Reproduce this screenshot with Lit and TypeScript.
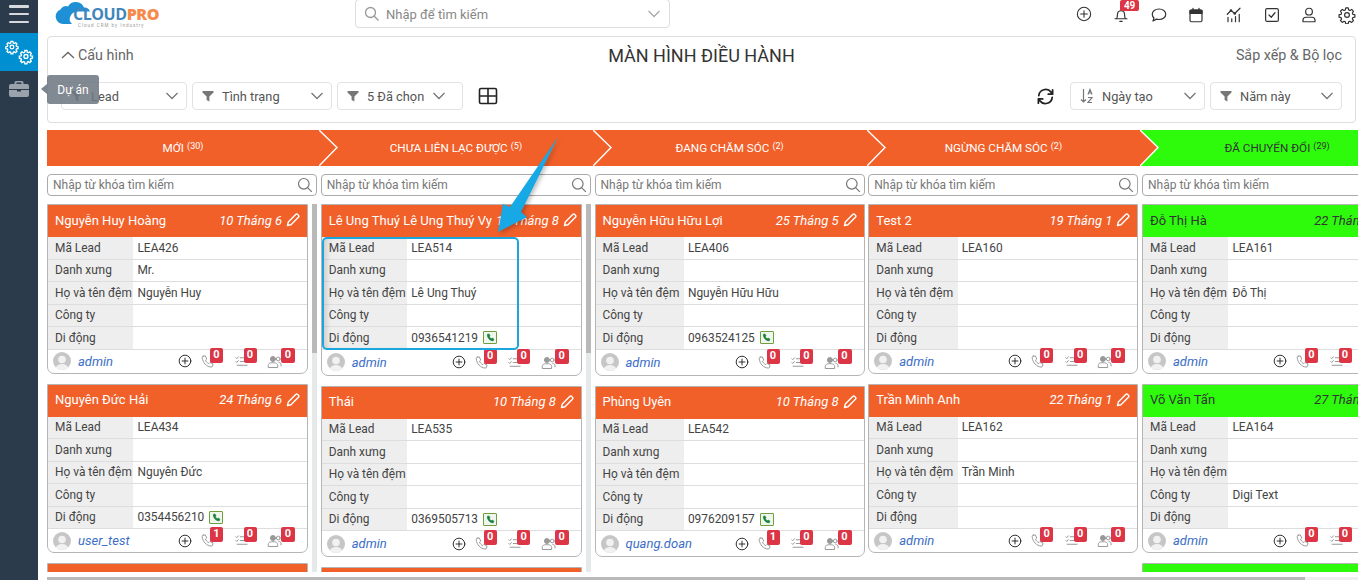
import { LitElement, css, html, svg } from "lit";
import { customElement } from "lit/decorators.js";
import { classMap } from "lit/directives/class-map.js";

const icon = (body: unknown, size = 18) =>
  html`<svg class="ico" width=${size} height=${size} viewBox="0 0 24 24" fill="none" stroke="currentColor" stroke-width="1.600" stroke-linecap="round" stroke-linejoin="round">${body}</svg>`;

const chevronDown = () => html`<svg class="chev" width="14" height="8" viewBox="0 0 14 8" fill="none" stroke="currentColor" stroke-width="1.300"><path d="M1.500 1 7 6.500 12.500 1" /></svg>`;
const funnel = () => html`<svg class="funnel" width="12" height="12" viewBox="0 0 12 12" fill="currentColor"><path d="M.5 1h11v1.400L7.400 6.600V11.500L4.600 10V6.600L.5 2.400z" /></svg>`;

const plusCircle = svg`<circle cx="12" cy="12" r="10" /><path d="M12 7v10M7 12h10" />`;
const bell = svg`<path d="M6 17c1-1.500 1.300-3 1.300-6a4.700 4.700 0 0 1 9.400 0c0 3 .3 4.500 1.300 6zM4 17h16M10.500 20.500h3M12 3v2" />`;
const comment = svg`<path d="M12 4c5.200 0 9 3 9 7s-3.800 7-9 7c-1.200 0-2.300-.2-3.300-.5L4 20l1.300-4C3.900 14.700 3 13 3 11c0-4 3.800-7 9-7z" />`;
const calendar = svg`<rect x="4" y="5" width="16" height="16" rx="2" /><path d="M4 6h16v4H4z" fill="currentColor" /><path d="M8 3v3M16 3v3" />`;
const chart = svg`<path d="M4 21v-6M9 21v-4M14 21v-7M19 21V11M3 11l5-5 5 4 7-7" /><circle cx="8" cy="6" r="1" /><circle cx="13" cy="10" r="1" />`;
const checkSquare = svg`<rect x="3.500" y="3.500" width="17" height="17" rx="2" /><path d="m8 12 3 3 5-6" />`;
const user = svg`<circle cx="12" cy="7.500" r="4.500" /><path d="M4 21v-2c0-2.500 2-4 4-4h8c2 0 4 1.500 4 4v2z" />`;
const gear = svg`<circle cx="12" cy="12" r="3.200" /><path d="M10.300 2.500h3.400l.5 2.700 1.700.8 2.400-1.400 2.300 2.500-1.500 2.200.7 1.800 2.700.5v3.300l-2.700.5-.7 1.800 1.500 2.300-2.400 2.400-2.300-1.500-1.800.8-.5 2.700h-3.300l-.5-2.700-1.800-.8-2.300 1.500-2.400-2.400 1.500-2.300-.8-1.800-2.600-.5v-3.300l2.700-.5.700-1.800-1.500-2.300 2.400-2.400 2.300 1.500 1.800-.8z" />`;
const refresh = svg`<path d="M3.500 11a8.700 8.700 0 0 1 15.500-4.500L21 9M21 3.500V9h-5.500M20.500 13A8.700 8.700 0 0 1 5 17.500L3 15M3 20.500V15h5.500" stroke-width="2.200" />`;
const phone = svg`<path d="M5 3.500 8.500 3l2.300 5-2 1.800c.8 2.300 2.600 4.400 5.200 5.600l2-2 4.800 2.500-.6 3.500c-.3 1-1.300 1.600-2.400 1.500C10.300 20.300 4.500 14 3.500 6c0-1.200.5-2.200 1.500-2.500z" />`;
const phoneSolid = svg`<path d="M5 3.500 8.500 3l2.300 5-2 1.800c.8 2.300 2.600 4.400 5.200 5.600l2-2 4.800 2.500-.6 3.500c-.3 1-1.300 1.600-2.400 1.500C10.300 20.300 4.500 14 3.500 6c0-1.200.5-2.200 1.500-2.500z" fill="currentColor" />`;
const tasks = svg`<path d="M10 6h11M10 12h11M5 18h16M3 6l1.500 1.500L7 4.500M3 12l1.500 1.500L7 10.500" />`;
const people = svg`<circle cx="9.500" cy="8" r="4" fill="currentColor" /><path d="M2 21v-2.500C2 15.500 4.500 14 7 14h5c2.500 0 5 1.500 5 4.500V21z" /><circle cx="18" cy="8" r="3" /><path d="M19 13.500c2 .3 3.500 1.500 3.500 4V19" />`;
const pencil = html`<svg class="pencil" width="14" height="14" viewBox="0 0 14 14" fill="none" stroke="currentColor" stroke-width="1.400" stroke-linejoin="round"><path d="M1.500 12.500 2.300 9 9.700 1.600a1.500 1.500 0 0 1 2.100 0l.6.6a1.500 1.500 0 0 1 0 2.100L5 11.700z" /></svg>`;

interface Card {
  name: string;
  date: string;
  lead: string;
  title?: string;
  middle?: string;
  company?: string;
  mobile?: string;
  owner: string;
  calls?: number;
  tall?: boolean;
}

interface Column {
  stage: string;
  count: number;
  green?: boolean;
  bar?: boolean;
  scrollbar?: boolean;
  cards: Card[];
}

const columns: Column[] = [
  {
    stage: "MỚI", count: 30, bar: true, scrollbar: true,
    cards: [
      { name: "Nguyễn Huy Hoàng", date: "10 Tháng 6", lead: "LEA426", title: "Mr.", middle: "Nguyễn Huy", owner: "admin" },
      { name: "Nguyên Đức Hải", date: "24 Tháng 6", lead: "LEA434", middle: "Nguyên Đức", mobile: "0354456210", owner: "user_test", calls: 1 },
      { name: "", date: "", lead: "", owner: "" },
    ],
  },
  {
    stage: "CHƯA LIÊN LẠC ĐƯỢC", count: 5, bar: true, scrollbar: true,
    cards: [
      { name: "Lê Ung Thuý Lê Ung Thuý Vy", date: "10 Tháng 8", lead: "LEA514", middle: "Lê Ung Thuý", mobile: "0936541219", owner: "admin", tall: true },
      { name: "Thái", date: "10 Tháng 8", lead: "LEA535", mobile: "0369505713", owner: "admin", tall: true },
      { name: "", date: "", lead: "", owner: "" },
    ],
  },
  {
    stage: "ĐANG CHĂM SÓC", count: 2,
    cards: [
      { name: "Nguyễn Hữu Hữu Lợi", date: "25 Tháng 5", lead: "LEA406", middle: "Nguyễn Hữu Hữu", mobile: "0963524125", owner: "admin", tall: true },
      { name: "Phùng Uyên", date: "10 Tháng 8", lead: "LEA542", mobile: "0976209157", owner: "quang.doan", calls: 1, tall: true },
    ],
  },
  {
    stage: "NGỪNG CHĂM SÓC", count: 2,
    cards: [
      { name: "Test 2", date: "19 Tháng 1", lead: "LEA160", owner: "admin" },
      { name: "Trần Minh Anh", date: "22 Tháng 1", lead: "LEA162", middle: "Trần Minh", owner: "admin" },
    ],
  },
  {
    stage: "ĐÃ CHUYỂN ĐỔI", count: 29, green: true, scrollbar: true,
    cards: [
      { name: "Đỗ Thị Hà", date: "22 Tháng 1", lead: "LEA161", middle: "Đỗ Thị", owner: "admin" },
      { name: "Võ Văn Tấn", date: "27 Tháng 1", lead: "LEA164", company: "Digi Text", owner: "admin" },
      { name: "", date: "", lead: "", owner: "" },
    ],
  },
];

@customElement("app-root")
export class AppRoot extends LitElement {
  static styles = css`
    :host {
      display: flex;
      height: 580px;
      width: 1358px;
      overflow: hidden;
      position: relative;
      background: #fff;
      font-family: Roboto, "Noto Sans", sans-serif;
      font-size: 12px;
      color: #444;
    }

    .side {
      width: 38px;
      flex: none;
      background: #2b3b4b;
      display: flex;
      flex-direction: column;
    }
    .burger {
      height: 33px;
      display: flex;
      flex-direction: column;
      gap: 5.300px;
      padding: 5px 9px 0;
      box-sizing: border-box;
    }
    .burger i {
      display: block;
      height: 2.500px;
      background: #d6dade;
      border-radius: 1px;
    }
    .side-item {
      height: 38px;
      display: flex;
      align-items: center;
      justify-content: center;
      color: #fff;
    }
    .side-item.active {
      background: #0090d1;
    }
    .side-item.case {
      height: 36px;
    }

    .tooltip {
      position: absolute;
      left: 47px;
      top: 75px;
      width: 52px;
      height: 29px;
      border-radius: 3px;
      background: rgba(108, 118, 128, 0.86);
      color: #fff;
      font-size: 12px;
      display: flex;
      align-items: center;
      justify-content: center;
    }
    .tooltip::before {
      content: "";
      position: absolute;
      left: -6px;
      top: 9px;
      border: 5px solid transparent;
      border-left: 0;
      border-right: 6px solid #7c858e;
    }

    .main {
      flex: 1;
      min-width: 0;
      display: flex;
      flex-direction: column;
    }

    .top {
      height: 36px;
      flex: none;
      display: flex;
      align-items: flex-start;
      padding-left: 17px;
      box-sizing: border-box;
    }
    .logo {
      width: 300px;
      flex: none;
      height: 28px;
      position: relative;
      display: flex;
      flex-direction: column;
      align-items: flex-start;
    }
    .logo-text {
      margin: 6px 0 0 18px;
      font-family: "Open Sans", sans-serif;
      font-weight: 700;
      font-size: 16px;
      letter-spacing: -0.45px;
      line-height: 17px;
      color: #3f86bd;
      position: relative;
    }
    .logo-text b {
      color: #f58a4b;
    }
    .logo-tag {
      margin-left: 23px;
      font-size: 4.500px;
      line-height: 5px;
      letter-spacing: 1px;
      color: #999;
      position: relative;
      white-space: nowrap;
    }
    .logo-cloud {
      position: absolute;
      left: 0;
      top: 2px;
    }
    .global-search {
      width: 315px;
      height: 29px;
      flex: none;
      margin-top: -1px;
      padding: 1px 8px 0;
      box-sizing: border-box;
      border: 1px solid #ddd;
      border-radius: 4px;
      display: flex;
      align-items: center;
      gap: 6px;
      color: #888;
      font-size: 13px;
    }
    .global-search span {
      flex: 1;
    }
    .global-search .chev {
      color: #aaa;
    }
    .tools {
      margin-left: auto;
      display: flex;
      gap: 19.700px;
      padding: 6px 2px 0 0;
      color: #333;
    }
    .tool {
      position: relative;
      display: flex;
    }
    .notif {
      position: absolute;
      left: 8px;
      top: -6px;
      background: #dc3545;
      color: #fff;
      font-size: 10px;
      font-style: normal;
      font-weight: 700;
      border-radius: 2px;
      padding: 0 4px;
      line-height: 11px;
    }

    .panel {
      height: 87px;
      flex: none;
      box-sizing: border-box;
      margin: 0 2px 0 9px;
      border: 1px solid #ddd;
      border-radius: 4px;
      padding: 0 13px;
      display: flex;
      flex-direction: column;
    }
    .panel-head {
      height: 36px;
      display: grid;
      grid-template-columns: 1fr auto 1fr;
      align-items: center;
      font-size: 14.300px;
      color: #666;
    }
    .config {
      display: flex;
      align-items: center;
      gap: 3px;
    }
    .panel-title {
      font-size: 18px;
      color: #333;
    }
    .sort-title {
      text-align: right;
    }
    .filters {
      margin-top: 9px;
      display: flex;
      align-items: center;
      gap: 5px;
    }
    .select {
      height: 28px;
      box-sizing: border-box;
      border: 1px solid #e2e2e2;
      border-radius: 4px;
      display: flex;
      align-items: center;
      padding: 0 7px 0 9px;
      gap: 8px;
      font-size: 12.800px;
      color: #555;
    }
    .select span {
      flex: 1;
    }
    .select.w126 {
      width: 126px;
    }
    .select.w140 {
      width: 140px;
    }
    .select.w135 {
      width: 135px;
    }
    .select.w132 {
      width: 132px;
    }
    .select.compact {
      justify-content: flex-start;
    }
    .select.compact span {
      flex: none;
    }
    .select .chev,
    .select .funnel,
    .sort-ico {
      color: #777;
      flex: none;
    }
    .grid-btn {
      margin-left: 10px;
      color: #222;
      display: flex;
    }
    .refresh {
      margin-left: auto;
      margin-right: 10px;
      color: #222;
      display: flex;
    }

    .stages {
      margin: 7px 0 0 9px;
      height: 36px;
      flex: none;
      display: grid;
      grid-template-columns: 272px repeat(4, 273.750px);
    }
    .stage {
      position: relative;
      background: #f2602a;
      color: #fff;
      font-size: 11.700px;
      display: flex;
      align-items: center;
      justify-content: center;
      gap: 3px;
      min-width: 0;
      white-space: nowrap;
    }
    .stage sup {
      font-size: 9px;
      line-height: 9px;
      margin-top: -3px;
    }
    .stage.green {
      background: #2dfb0b;
      color: #333;
    }
    .stage .tip {
      position: absolute;
      left: 100%;
      top: 0;
      z-index: 1;
    }

    .board {
      height: 398px;
      flex: none;
      overflow: hidden;
      margin: 8px 0 0 9px;
      display: grid;
      grid-template-columns: repeat(5, 270px);
      gap: 3.750px;
    }
    .col {
      min-width: 0;
      display: flex;
      flex-direction: column;
    }
    .col-search {
      height: 22px;
      flex: none;
      box-sizing: border-box;
      border: 1px solid #aaa;
      border-radius: 4px;
      display: flex;
      align-items: center;
      justify-content: space-between;
      padding: 0 3px 0 5px;
      color: #777;
      font-size: 12px;
    }
    .col-body {
      margin-top: 8px;
      flex: 1;
      min-height: 0;
      display: flex;
      gap: 4px;
    }
    .cards {
      flex: 1;
      min-width: 0;
      display: flex;
      flex-direction: column;
      gap: 10px;
    }
    .col.scrollbar .cards {
      flex: none;
      width: 261px;
    }
    .bar {
      width: 5px;
      flex: none;
      background: #e6e9e9;
    }
    .bar i {
      display: block;
      height: 149px;
      background: #b9b9b9;
    }

    .card {
      flex: none;
      border: 1px solid #b5b5b5;
      border-radius: 0 0 7px 7px;
      overflow: hidden;
    }
    .card-head {
      height: 32px;
      box-sizing: border-box;
      padding: 0 7px 2px;
      background: #f2602a;
      color: #fff;
      display: flex;
      align-items: center;
      gap: 4px;
      font-size: 13px;
      white-space: nowrap;
    }
    .green .card-head {
      background: #2dfb0b;
      color: #333;
    }
    .card-name {
      flex: 1;
    }
    .card-date {
      font-style: italic;
    }
    .pencil {
      flex: none;
    }
    .row {
      display: grid;
      grid-template-columns: 33% 1fr;
      min-height: 21.500px;
      border-bottom: 1px solid #ddd;
      align-items: stretch;
      font-size: 11.900px;
    }
    .row b {
      font-weight: 400;
      background: #eee;
      padding-left: 7px;
      display: flex;
      align-items: center;
      color: #444;
      white-space: nowrap;
    }
    .row span {
      display: flex;
      align-items: center;
      padding-left: 4px;
      gap: 5px;
      color: #444;
    }
    .tel {
      width: 14px;
      height: 13px;
      box-sizing: border-box;
      border: 1.500px solid #6f9e3a;
      border-radius: 1px;
      background: #eef6ee;
      color: #17803a;
      display: flex;
      align-items: center;
      justify-content: center;
    }
    .card-foot {
      height: 23px;
      display: flex;
      align-items: center;
      padding: 0 25px 0 5px;
      gap: 7px;
    }
    .card-foot.tall {
      height: 25px;
    }
    .avatar {
      flex: none;
      display: flex;
    }
    .owner {
      flex: 1;
      font-style: italic;
      color: #3b6ec6;
      font-size: 13px;
    }
    .plus {
      color: #222;
      display: flex;
    }
    .acts {
      display: flex;
      gap: 18.500px;
      margin-left: 1px;
      color: #999;
    }
    .act {
      position: relative;
      width: 15px;
      display: flex;
    }
    .badge {
      position: absolute;
      left: 10px;
      top: -6px;
      width: 13px;
      height: 15px;
      border-radius: 2px;
      background: #dc3545;
      color: #fff;
      font-size: 11px;
      font-style: normal;
      font-weight: 700;
      line-height: 14px;
      text-align: center;
    }
    .act.third .badge {
      left: 14px;
      width: 14px;
    }

    .hscroll {
      height: 3px;
      flex: none;
      margin: 5px 0 0 9px;
      background: #efefef;
    }
    .hscroll i {
      display: block;
      width: 1258px;
      height: 100%;
      background: #b9b9b9;
    }

    .mark {
      position: absolute;
      left: 322px;
      top: 237px;
      width: 197px;
      height: 113px;
      box-sizing: border-box;
      border: 2px solid #1ba7de;
      border-radius: 5px;
      box-shadow: inset 6px 0 6px -4px rgba(0, 0, 0, 0.16);
      pointer-events: none;
    }
    .arrow {
      position: absolute;
      left: 490px;
      top: 130px;
      pointer-events: none;
      filter: drop-shadow(2px 2px 2px rgba(0, 0, 0, 0.25));
    }
  `;

  renderStage(col: Column, index: number) {
    const last = index === columns.length - 1;
    return html`<div class=${classMap({ stage: true, green: !!col.green })}>
      ${col.stage} <sup>(${col.count})</sup>
      ${last
        ? null
        : html`<svg class="tip" width="20" height="36" viewBox="0 0 20 36">
            <path d="M0 0 18 17.500 0 36z" fill="#f2602a" />
            <path d="M0 0 18 17.500 0 36" fill="none" stroke="#fff" stroke-width="1.400" />
          </svg>`}
    </div>`;
  }

  renderRow(label: string, value?: string, tel = false) {
    return html`<div class="row">
      <b>${label}</b>
      <span>${value}${tel ? html`<i class="tel">${icon(phoneSolid, 9)}</i>` : null}</span>
    </div>`;
  }

  renderCard(card: Card) {
    if (!card.lead) return html`<div class="card"><div class="card-head"></div></div>`;
    return html`<div class="card">
      <div class="card-head">
        <span class="card-name">${card.name}</span>
        <span class="card-date">${card.date}</span>
        ${pencil}
      </div>
      ${this.renderRow("Mã Lead", card.lead)}
      ${this.renderRow("Danh xưng", card.title)}
      ${this.renderRow("Họ và tên đệm", card.middle)}
      ${this.renderRow("Công ty", card.company)}
      ${this.renderRow("Di động", card.mobile, !!card.mobile)}
      <div class=${classMap({ "card-foot": true, tall: !!card.tall })}>
        <span class="avatar">
          <svg width="18" height="18" viewBox="0 0 18 18">
            <defs><clipPath id="round"><circle cx="9" cy="9" r="9" /></clipPath></defs>
            <circle cx="9" cy="9" r="9" fill="#c6c6c6" />
            <g clip-path="url(#round)" fill="#f1f1f1">
              <circle cx="9" cy="7.500" r="3.800" />
              <ellipse cx="9" cy="17" rx="6.500" ry="5" />
            </g>
          </svg>
        </span>
        <span class="owner">${card.owner}</span>
        <span class="plus">${icon(plusCircle, 14)}</span>
        <div class="acts">
          <span class="act">${icon(phone, 15)}<em class="badge">${card.calls ?? 0}</em></span>
          <span class="act">${icon(tasks, 15)}<em class="badge">0</em></span>
          <span class="act third">${icon(people, 15)}<em class="badge">0</em></span>
        </div>
      </div>
    </div>`;
  }

  render() {
    return html`
      <aside class="side">
        <div class="burger"><i></i><i></i><i></i></div>
        <div class="side-item active">
          <svg width="30" height="25" viewBox="0 0 30 25" fill="none" stroke="#fff" stroke-width="2.200">
            <g transform="translate(1 0) scale(.58)">${gear}</g>
            <g transform="translate(14.500 9) scale(.62)">${gear}</g>
          </svg>
        </div>
        <div class="side-item case">
          <svg width="20" height="16" viewBox="0 0 20 16" fill="#9aa3ac">
            <path d="M7 0h6a1.500 1.500 0 0 1 1.500 1.500V3H18a2 2 0 0 1 2 2v3H0V5a2 2 0 0 1 2-2h3.500V1.500A1.500 1.500 0 0 1 7 0zm.5 1.500V3h5V1.500z" />
            <path d="M0 9h8v1.500h4V9h8v5a2 2 0 0 1-2 2H2a2 2 0 0 1-2-2z" />
          </svg>
        </div>
      </aside>

      <div class="main">
        <header class="top">
          <div class="logo">
            <svg class="logo-cloud" width="40" height="24" viewBox="0 0 40 24" fill="#1f8fd6">
              <path d="M8 22A7.500 7.500 0 0 1 5.500 7.500 6 6 0 0 1 13 4.500 9 9 0 0 1 29 5.500 6 6 0 0 1 35 9.500H24A8 8 0 0 0 15 19.500L17 22Z" />
            </svg>
            <span class="logo-text">CLOUD<b>PRO</b></span>
            <span class="logo-tag">Cloud CRM by Industry</span>
          </div>
          <div class="global-search">
            <svg width="16" height="16" viewBox="0 0 16 16" fill="none" stroke="#999" stroke-width="1.300"><circle cx="6.500" cy="6.500" r="5" /><path d="m10.300 10.300 4.200 4.200" /></svg>
            <span>Nhập để tìm kiếm</span>
            ${chevronDown()}
          </div>
          <nav class="tools">
            <span class="tool">${icon(plusCircle, 16)}</span>
            <span class="tool">${icon(bell, 18)}<em class="notif">49</em></span>
            <span class="tool">${icon(comment, 18)}</span>
            <span class="tool">${icon(calendar, 18)}</span>
            <span class="tool">${icon(chart, 18)}</span>
            <span class="tool">${icon(checkSquare, 18)}</span>
            <span class="tool">${icon(user, 18)}</span>
            <span class="tool">${icon(gear, 18)}</span>
          </nav>
        </header>

        <section class="panel">
          <div class="panel-head">
            <span class="config">
              <svg width="14" height="8" viewBox="0 0 14 8" fill="none" stroke="#666" stroke-width="1.300"><path d="M1 7 7 1.500 13 7" /></svg>
              Cấu hình
            </span>
            <span class="panel-title">MÀN HÌNH ĐIỀU HÀNH</span>
            <span class="sort-title">Sắp xếp &amp; Bộ lọc</span>
          </div>
          <div class="filters">
            <div class="select w126">${funnel()}<span>Lead</span>${chevronDown()}</div>
            <div class="select w140">${funnel()}<span>Tình trạng</span>${chevronDown()}</div>
            <div class="select w126 compact">${funnel()}<span>5 Đã chọn</span>${chevronDown()}</div>
            <span class="grid-btn">
              <svg width="20" height="18" viewBox="0 0 20 18" fill="none" stroke="currentColor" stroke-width="1.600"><rect x="1.500" y="1.500" width="17" height="15" rx="1.500" /><path d="M10 1.500v15M1.500 9h17" /></svg>
            </span>
            <span class="refresh">${icon(refresh, 19)}</span>
            <div class="select w135">
              <svg class="sort-ico" width="14" height="16" viewBox="0 0 14 16" fill="none" stroke="currentColor" stroke-width="1.200"><path d="M3.500 1v13M1 11.500l2.500 2.500L6 11.500M8 6.500l2-5 2 5M8.700 5h2.600M8 9.500h4l-4 5h4" /></svg>
              <span>Ngày tạo</span>${chevronDown()}
            </div>
            <div class="select w132">${funnel()}<span>Năm này</span>${chevronDown()}</div>
          </div>
        </section>

        <div class="stages">${columns.map((c, i) => this.renderStage(c, i))}</div>

        <div class="board">
          ${columns.map(
            (col) => html`<div class=${classMap({ col: true, green: !!col.green, scrollbar: !!col.scrollbar })}>
              <div class="col-search">
                <span>Nhập từ khóa tìm kiếm</span>
                <svg width="16" height="16" viewBox="0 0 16 16" fill="none" stroke="#777" stroke-width="1.200"><circle cx="6.800" cy="6.800" r="5.300" /><path d="m10.800 10.800 4 4" /></svg>
              </div>
              <div class="col-body">
                <div class="cards">${col.cards.map((card) => this.renderCard(card))}</div>
                ${col.bar ? html`<div class="bar"><i></i></div>` : null}
              </div>
            </div>`
          )}
        </div>

        <div class="hscroll"><i></i></div>
      </div>

      <div class="tooltip">Dự án</div>
      <div class="mark"></div>
      <svg class="arrow" width="72" height="108" viewBox="0 0 72 108">
        <path d="M68 7 20 77 13 74 8 102 37 87 31 82z" fill="#16a9e6" />
      </svg>
    `;
  }
}
